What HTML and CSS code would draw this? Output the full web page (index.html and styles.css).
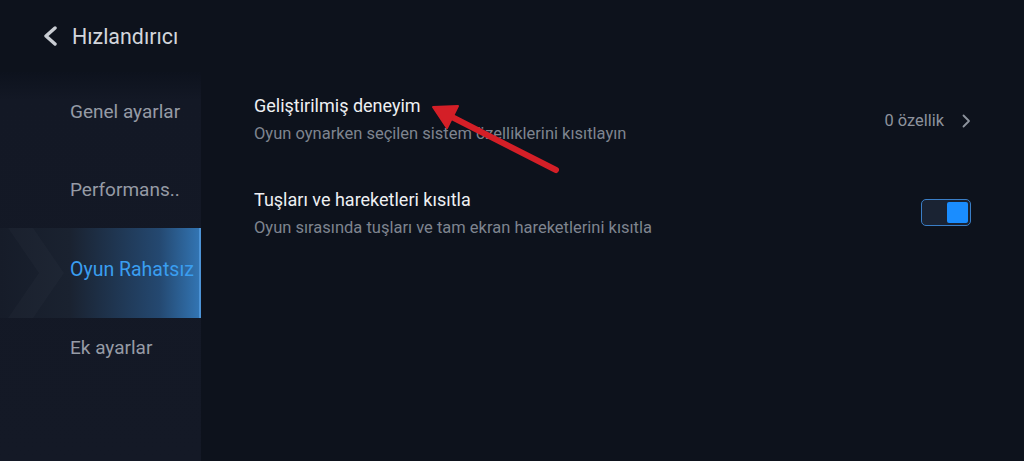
FILE: index.html
```html
<!DOCTYPE html>
<html lang="tr">
<head>
  <meta charset="UTF-8" />
  <meta name="viewport" content="width=device-width, initial-scale=1" />
  <title>Hızlandırıcı</title>
  <link rel="stylesheet" href="styles.css">
</head>
<body>

  <header class="topbar">
    <svg class="back-icon" width="16" height="20" viewBox="0 0 16 20">
      <path d="M13 2 L4 10 L13 18" fill="none" stroke="#c9cdd3" stroke-width="3.4" stroke-linecap="round" stroke-linejoin="round"/>
    </svg>
    <span class="title">Hızlandırıcı</span>
  </header>

  <div class="layout">
    <nav class="sidebar">
      <div class="nav-item">Genel ayarlar</div>
      <div class="nav-item">Performans..</div>
      <div class="nav-item active">Oyun Rahatsız</div>
      <div class="nav-item">Ek ayarlar</div>
    </nav>

    <main class="content">
      <div class="row">
        <div class="row-text">
          <div class="row-title">Geliştirilmiş deneyim</div>
          <div class="row-sub">Oyun oynarken seçilen sistem özelliklerini kısıtlayın</div>
        </div>
        <div class="row-value">
          <span>0 özellik</span>
          <svg width="10" height="14" viewBox="0 0 10 14">
            <path d="M2.5 1.5 L8 7 L2.5 12.5" fill="none" stroke="#8d939d" stroke-width="1.8" stroke-linecap="round" stroke-linejoin="round"/>
          </svg>
        </div>
      </div>

      <div class="row">
        <div class="row-text">
          <div class="row-title">Tuşları ve hareketleri kısıtla</div>
          <div class="row-sub">Oyun sırasında tuşları ve tam ekran hareketlerini kısıtla</div>
        </div>
        <div class="toggle on"><span class="knob"></span></div>
      </div>
    </main>
  </div>

  <!-- kırmızı ok işareti (ekran görüntüsü üzerindeki not) -->
  <svg class="annotation" width="1024" height="461" viewBox="0 0 1024 461">
    <line x1="556" y1="170" x2="450" y2="116" stroke="#d41f27" stroke-width="6" stroke-linecap="round"/>
    <polygon points="433,107 458,106 447,128" fill="#d41f27" stroke="#d41f27" stroke-width="2" stroke-linejoin="round"/>
  </svg>

</body>
</html>
```

FILE: styles.css
```css
html, body {
  margin: 0;
  height: 100%;
}
body {
  font-family: Roboto, "Noto Sans", Arial, sans-serif;
  background: #0d121c;
  color: #eee;
  overflow: hidden;
  position: relative;
}

.topbar {
  height: 72px;
  display: flex;
  align-items: center;
  padding-left: 42px;
  box-sizing: border-box;
}
.back-icon {
  margin-top: -1px;
}
.title {
  margin-left: 14px;
  font-size: 21.4px;
  color: #d2d6dc;
}

.layout {
  display: flex;
  height: calc(100% - 72px);
}

.sidebar {
  width: 201px;
  flex-shrink: 0;
  background: linear-gradient(to bottom, #0d121d 0, #131825 28px, #141926 100%);
  display: flex;
  flex-direction: column;
}
.nav-item {
  height: 78px;
  box-sizing: border-box;
  display: flex;
  align-items: center;
  padding-left: 70px;
  font-size: 19px;
  color: #969ba5;
  white-space: nowrap;
  overflow: hidden;
  position: relative;
}
.nav-item.active {
  height: 90px;
  padding-bottom: 8px;
  margin-bottom: -10px;
  font-size: 19.5px;
  color: #3a9ef0;
  background: linear-gradient(to right, #161c29 0%, #1a2230 35%, #244870 80%, #3274b2 100%);
  border-right: 2px solid #4c93d6;
}
.nav-item.active::before {
  content: "";
  position: absolute;
  left: 8px;
  top: 0;
  width: 56px;
  height: 100%;
  background: rgba(255, 255, 255, 0.02);
  clip-path: polygon(0 0, 45% 0, 100% 50%, 45% 100%, 0 100%, 55% 50%);
}

.content {
  flex: 1;
  padding: 0 53px;
}
.row {
  display: flex;
  align-items: center;
  justify-content: space-between;
  padding: 24px 0 22px;
}
.row-title {
  font-size: 18px;
  line-height: 20px;
  color: #eef0f3;
}
.row-sub {
  margin-top: 8px;
  font-size: 16.5px;
  line-height: 20px;
  color: #7e848f;
}
.row-value {
  display: flex;
  align-items: center;
  gap: 17px;
  font-size: 16.4px;
  color: #8d939d;
  margin-top: 1px;
}

.toggle {
  width: 50px;
  height: 27px;
  box-sizing: border-box;
  border: 1.5px solid #3a7ec6;
  border-radius: 5px;
  background: #1a2333;
  display: flex;
  align-items: center;
  padding: 0 2px;
  margin-top: -4px;
}
.toggle.on {
  justify-content: flex-end;
}
.knob {
  width: 21px;
  height: 21px;
  border-radius: 2px;
  background: #1a8dff;
}

.annotation {
  position: absolute;
  left: 0;
  top: 0;
  pointer-events: none;
}
```
